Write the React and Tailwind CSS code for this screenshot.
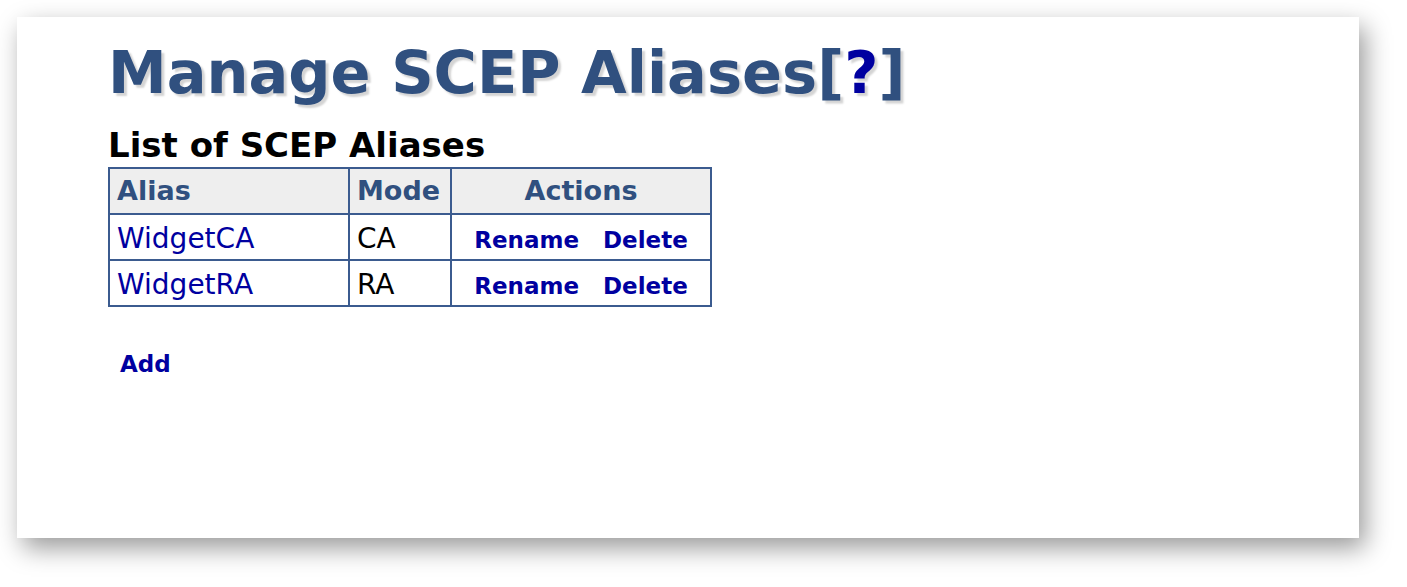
import React from 'react';

const aliases = [
  { name: 'WidgetCA', mode: 'CA' },
  { name: 'WidgetRA', mode: 'RA' },
];

const linkCls = "font-bold text-[#0000a0] text-[23px]";

export default function App() {
  return (
    <div className="w-[1407px] h-[587px] bg-white pt-[17px] pl-[17px] font-['DejaVu_Sans',Verdana,sans-serif]">
      <div className="w-[1342px] h-[521px] bg-white shadow-[6px_10px_24px_rgba(0,0,0,0.4)] pl-[91px] pt-[21px]">
        <h1 className="text-[59px] leading-[70px] font-bold text-[#30507f] [text-shadow:3px_3px_2px_#d4d4d4]">
          Manage SCEP Aliases[<a href="#" className="text-[#0000a0]">?</a>]
        </h1>

        <h2 className="text-[34px] leading-[40px] font-bold text-black mt-[17px]">List of SCEP Aliases</h2>

        <table className="border-collapse border-2 border-[#3b5b8f] mt-[2px]">
          <thead>
            <tr className="bg-[#eeeeee] h-[46px]">
              <th className="w-[240px] border-2 border-[#3b5b8f] text-left pl-[7px] text-[27px] font-bold text-[#30507f]">Alias</th>
              <th className="w-[102px] border-2 border-[#3b5b8f] text-left pl-[7px] text-[27px] font-bold text-[#30507f]">Mode</th>
              <th className="w-[260px] border-2 border-[#3b5b8f] text-center text-[27px] font-bold text-[#30507f]">Actions</th>
            </tr>
          </thead>
          <tbody>
            {aliases.map(a => (
              <tr key={a.name} className="h-[46px]">
                <td className="border-2 border-[#3b5b8f] pl-[7px] pt-[3px] leading-[36px] text-[28px] text-[#0000a0]">
                  <a href="#">{a.name}</a>
                </td>
                <td className="border-2 border-[#3b5b8f] pl-[7px] pt-[3px] leading-[36px] text-[28px] text-black">{a.mode}</td>
                <td className="border-2 border-[#3b5b8f] text-center">
                  <div className="flex justify-center gap-[24px] pt-[6px] leading-[30px]">
                    <a href="#" className={linkCls}>Rename</a>
                    <a href="#" className={linkCls}>Delete</a>
                  </div>
                </td>
              </tr>
            ))}
          </tbody>
        </table>

        <div className="mt-[40px] pl-[12px]">
          <a href="#" className={linkCls}>Add</a>
        </div>
      </div>
    </div>
  );
}
